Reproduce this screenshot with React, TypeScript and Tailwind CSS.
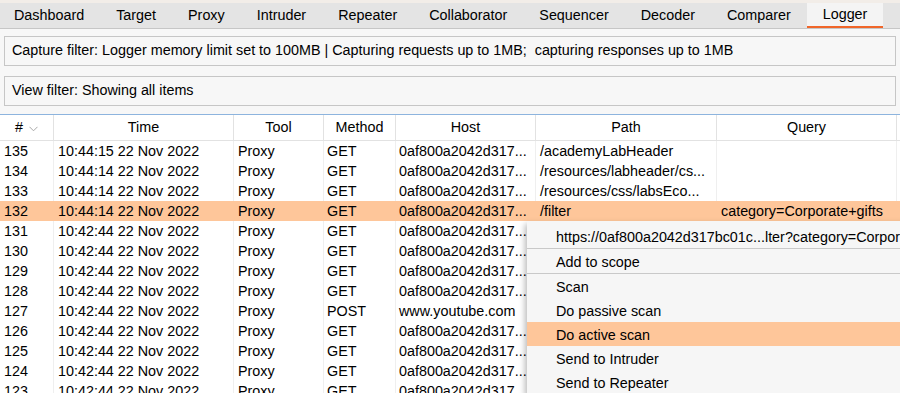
import React from "react";

const tabs = ["Dashboard", "Target", "Proxy", "Intruder", "Repeater", "Collaborator", "Sequencer", "Decoder", "Comparer", "Logger"];

const cols = [
  { name: "#", w: "w-[54px]" },
  { name: "Time", w: "w-[180px]" },
  { name: "Tool", w: "w-[90px]" },
  { name: "Method", w: "w-[72px]" },
  { name: "Host", w: "w-[140px]" },
  { name: "Path", w: "w-[181px]" },
  { name: "Query", w: "w-[180px]" },
];

const H = "0af800a2042d317...";
type Row = [string, string, string, string, string, string, string];
const rows: Row[] = [
  ["135", "10:44:15 22 Nov 2022", "Proxy", "GET", H, "/academyLabHeader", ""],
  ["134", "10:44:14 22 Nov 2022", "Proxy", "GET", H, "/resources/labheader/cs...", ""],
  ["133", "10:44:14 22 Nov 2022", "Proxy", "GET", H, "/resources/css/labsEco...", ""],
  ["132", "10:44:14 22 Nov 2022", "Proxy", "GET", H, "/filter", "category=Corporate+gifts"],
  ["131", "10:42:44 22 Nov 2022", "Proxy", "GET", H, "", ""],
  ["130", "10:42:44 22 Nov 2022", "Proxy", "GET", H, "", ""],
  ["129", "10:42:44 22 Nov 2022", "Proxy", "GET", H, "", ""],
  ["128", "10:42:44 22 Nov 2022", "Proxy", "GET", H, "", ""],
  ["127", "10:42:44 22 Nov 2022", "Proxy", "POST", "www.youtube.com", "", ""],
  ["126", "10:42:44 22 Nov 2022", "Proxy", "GET", H, "", ""],
  ["125", "10:42:44 22 Nov 2022", "Proxy", "GET", H, "", ""],
  ["124", "10:42:44 22 Nov 2022", "Proxy", "GET", H, "", ""],
  ["123", "10:42:44 22 Nov 2022", "Proxy", "GET", H, "", ""],
];

function Chevron() {
  return (
    <svg width="9" height="6" viewBox="0 0 9 6" className="ml-[6px] mt-[1px]">
      <path d="M0.5 0.8 L4.5 4.8 L8.5 0.8" fill="none" stroke="#a8a8a8" strokeWidth="1" />
    </svg>
  );
}

const item = "h-[24px] flex items-center pl-[29px] pt-[3px]";

export default function App() {
  return (
    <div className="w-[900px] h-[393px] overflow-hidden relative bg-[#f7f7f7] text-[14.35px] text-black font-['Liberation_Sans',Arial,sans-serif]">
      <div className="h-[3px] bg-[#f2ede8]" />
      <div className="flex h-[26px] bg-[#e4e4e4] border-b border-[#c6c6c6]">
        {tabs.map((t, i) => (
          <div
            key={t}
            className={
              t === "Logger"
                ? "flex items-center px-4 h-[25px] bg-[#f4f4f4] border-b-2 border-[#f0662a]"
                : i === 0
                ? "flex items-center pl-[14px] pr-4 h-[25px]"
                : "flex items-center px-4 h-[25px]"
            }
          >
            {t}
          </div>
        ))}
      </div>
      <div className="px-1 pt-[7px]">
        <div className="h-[30px] border border-[#c6c6c6] flex items-center pl-[7px] whitespace-nowrap">
          Capture filter: Logger memory limit set to 100MB | Capturing requests up to 1MB;&nbsp; capturing responses up to 1MB
        </div>
        <div className="h-[30px] border border-[#c6c6c6] flex items-center pl-[7px] mt-[10px]">
          View filter: Showing all items
        </div>
      </div>
      <div className="mt-[8px] bg-white">
        <div className="flex h-[27px] border-t border-b border-[#8db4de] border-b-[#e2e2e2] bg-white">
          {cols.map((c) => (
            <div key={c.name} className={`${c.w} shrink-0 flex items-center justify-center pt-[1px] border-r border-[#e2e2e2]`}>
              {c.name}
              {c.name === "#" && <Chevron />}
            </div>
          ))}
          <div className="flex-1" />
        </div>
        {rows.map((r) => {
          const sel = r[0] === "132";
          return (
            <div key={r[0]} className={`flex h-[20px] ${sel ? "bg-[#fec69a]" : "bg-white"}`}>
              {cols.map((c, j) => (
                <div
                  key={c.name}
                  className={`${c.w} shrink-0 flex items-center pt-[2px] ${j === 3 || j === 4 ? "pl-[3px]" : "pl-1"} whitespace-nowrap overflow-hidden border-r ${sel ? "border-[#fec69a]" : "border-[#efefef]"}`}
                >
                  {r[j]}
                </div>
              ))}
              <div className="flex-1" />
            </div>
          );
        })}
      </div>
      <div className="absolute left-[527px] top-[221px] w-[420px] bg-[#f6f6f6] pt-[3px] shadow-[-2px_3px_6px_rgba(0,0,0,0.28)] whitespace-nowrap">
        <div className={item}>
          https://0af800a2042d317bc01c...lter?category=Corporate+gifts
        </div>
        <div className="h-px bg-[#c9c9c9]" />
        <div className={item}>Add to scope</div>
        <div className="h-px bg-[#c9c9c9]" />
        <div className={item}>Scan</div>
        <div className={item}>Do passive scan</div>
        <div className={`${item} bg-[#fec69a]`}>Do active scan</div>
        <div className={item}>Send to Intruder</div>
        <div className={item}>Send to Repeater</div>
      </div>
    </div>
  );
}
